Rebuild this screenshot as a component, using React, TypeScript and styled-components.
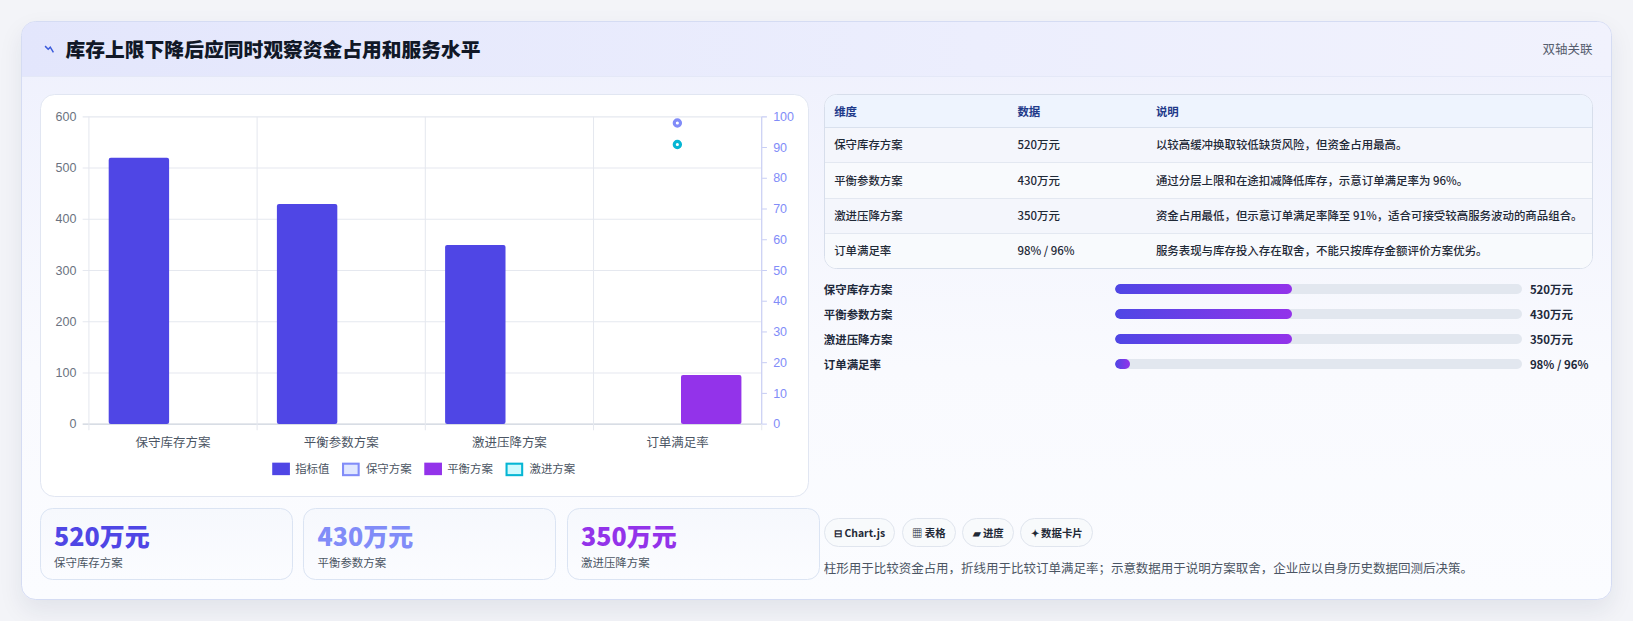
import React from "react";
import styled, { createGlobalStyle } from "styled-components";

const Global = createGlobalStyle`
  html, body { margin: 0; padding: 0; background: #f3f4f8; }
  body { font-family: "Noto Sans CJK SC", "Noto Sans", sans-serif; color: #1e293b; }
`;

const Page = styled.div`
  zoom: 1.0415;
  padding: 20px 85px 20px 20px;
  height: 596px;
  box-sizing: border-box;
`;
const Card = styled.div`
  width: 1528px;
  height: 556px;
  box-sizing: border-box;
  border: 1px solid #d5dcf3;
  border-radius: 14px;
  background: linear-gradient(180deg, #eef0fd 0%, #f9fafe 60%, #fbfcff 100%);
  box-shadow: 0 10px 24px rgba(30, 40, 80, 0.08);
  overflow: hidden;
  display: flex;
  flex-direction: column;
`;
const Header = styled.div`
  height: 52px;
  display: flex;
  align-items: center;
  justify-content: space-between;
  padding: 0 18px 0 20px;
  background: linear-gradient(90deg, #e3e6fc 0%, #eceefd 60%, #f1f2fd 100%);
  border-bottom: 1px solid #e4e8f7;
`;
const Title = styled.h1`
  margin: 0;
  font-size: 19px;
  font-weight: 800;
  color: #111827;
  display: flex;
  align-items: center;
  gap: 10px;
`;
const Tag = styled.span`
  font-size: 12px;
  color: #555d6e;
`;
const Body = styled.div`
  flex: 1;
  display: grid;
  grid-template-columns: 739px 739px;
  column-gap: 14px;
  padding: 16px 17px 18px 17px;
`;
const Col = styled.div`
  display: flex;
  flex-direction: column;
`;
const ChartCard = styled.div`
  height: 387px;
  box-sizing: border-box;
  background: #fff;
  border: 1px solid #e1e6f2;
  border-radius: 14px;
`;
const Stats = styled.div`
  display: grid;
  grid-template-columns: repeat(3, 1fr);
  gap: 10px;
  margin-top: 11px;
  width: 749px;
`;
const Stat = styled.div`
  height: 69px;
  box-sizing: border-box;
  border: 1px solid #dbe4f3;
  border-radius: 12px;
  background: linear-gradient(180deg, #f6f8fd, #fbfcff);
  padding: 9px 13px;
`;
const StatVal = styled.div<{ $c: string }>`
  font-size: 24px;
  font-weight: 800;
  color: ${(p) => p.$c};
  line-height: 32px;
`;
const StatLbl = styled.div`
  font-size: 11px;
  color: #4b5563;
  margin-top: 2px;
`;
const Table = styled.table`
  width: 100%;
  border-collapse: separate;
  border-spacing: 0;
  border: 1px solid #d7deeb;
  border-radius: 12px;
  overflow: hidden;
  font-size: 11px;
  background: #fff;
`;
const Th = styled.th`
  text-align: left;
  font-weight: 700;
  color: #1e3a8a;
  background: #eef4fe;
  height: 31px;
  padding: 0 9px;
  border-bottom: 1px solid #d9e1ee;
`;
const Td = styled.td<{ $alt?: boolean; $last?: boolean }>`
  padding: 8px 9px;
  height: 17px;
  line-height: 17px;
  color: #1f2937;
  background: ${(p) => (p.$alt ? "#f8fafd" : "#f4f6fc")};
  border-bottom: ${(p) => (p.$last ? "none" : "1px solid #e3e8f1")};
  vertical-align: top;
  font-weight: 500;
`;
const Bars = styled.div`
  display: flex;
  flex-direction: column;
  gap: 6px;
  margin-top: 10px;
`;
const BarRow = styled.div`
  display: grid;
  grid-template-columns: 272px 390px 1fr;
  align-items: center;
  column-gap: 8px;
  font-size: 11px;
  font-weight: 600;
  height: 18px;
  white-space: nowrap;
`;
const Track = styled.div`
  height: 10px;
  border-radius: 5px;
  background: #e2e7ef;
  overflow: hidden;
`;
const Fill = styled.div`
  height: 100%;
  border-radius: 5px;
  background: linear-gradient(90deg, #4f46e5, #9333ea);
`;
const Chips = styled.div`
  margin-top: auto;
  display: flex;
  gap: 6px;
`;
const Chip = styled.span`
  height: 27px;
  box-sizing: border-box;
  display: inline-flex;
  align-items: center;
  gap: 3px;
  padding: 0 9px;
  border: 1px solid #e0e5ee;
  border-radius: 14px;
  background: #f8fafc;
  font-size: 10px;
  font-weight: 600;
  color: #1f2937;
`;
const Note = styled.p`
  margin: 12px 0 3px;
  font-size: 12px;
  color: #4b5563;
`;

const rows = [
  ["保守库存方案", "520万元", "以较高缓冲换取较低缺货风险，但资金占用最高。"],
  ["平衡参数方案", "430万元", "通过分层上限和在途扣减降低库存，示意订单满足率为 96%。"],
  ["激进压降方案", "350万元", "资金占用最低，但示意订单满足率降至 91%，适合可接受较高服务波动的商品组合。"],
  ["订单满足率", "98% / 96%", "服务表现与库存投入存在取舍，不能只按库存金额评价方案优劣。"],
];
const bars = [
  ["保守库存方案", 43.6, "520万元"],
  ["平衡参数方案", 43.6, "430万元"],
  ["激进压降方案", 43.6, "350万元"],
  ["订单满足率", 3.5, "98% / 96%"],
] as const;

function Chart() {
  const x0 = 46, x1 = 692, y0 = 21, y1 = 316;
  const h = y1 - y0;
  const cw = (x1 - x0) / 4;
  const cats = ["保守库存方案", "平衡参数方案", "激进压降方案", "订单满足率"];
  const vals = [520, 430, 350];
  const ax = { fontSize: 12, fill: "#6b7280", fontFamily: "Liberation Sans, sans-serif" } as const;
  return (
    <svg width="739" height="385">
      {[0, 1, 2, 3, 4, 5, 6].map((i) => {
        const y = y1 - (h * i) / 6;
        return (
          <g key={i}>
            <line x1={x0 - 6} x2={x1} y1={y} y2={y} stroke={i === 0 ? "#cbd2dc" : "#e5e8ef"} />
            <text x={x0 - 12} y={y + 4} textAnchor="end" {...ax}>{i * 100}</text>
          </g>
        );
      })}
      {[0, 1, 2, 3, 4, 5, 6, 7, 8, 9, 10].map((i) => {
        const y = y1 - (h * i) / 10;
        return (
          <g key={i}>
            <line x1={x1} x2={x1 + 5} y1={y} y2={y} stroke="#c7cdf5" />
            <text x={x1 + 11} y={y + 4} {...ax} fill="#818cf8">{i * 10}</text>
          </g>
        );
      })}
      {[0, 1, 2, 3, 4].map((i) => (
        <line key={i} x1={x0 + cw * i} x2={x0 + cw * i} y1={y0} y2={y1 + 6} stroke="#e5e8ef" />
      ))}
      <line x1={x1} x2={x1} y1={y0} y2={y1} stroke="#c7cdf5" />
      {vals.map((v, i) => (
        <rect key={i} x={x0 + cw * i + 19} y={y1 - (h * v) / 600} width={58} height={(h * v) / 600} fill="#4f46e5" rx="2" />
      ))}
      <rect x={x0 + cw * 3 + 84} y={y1 - (h * 96) / 600} width={58} height={(h * 96) / 600} fill="#9333ea" rx="2" />
      <circle cx={611} cy={y1 - h * 0.98} r="3" fill="#fff" stroke="#818cf8" strokeWidth="3" />
      <circle cx={611} cy={y1 - h * 0.91} r="3" fill="#fff" stroke="#06b6d4" strokeWidth="3" />
      {cats.map((c, i) => (
        <text key={c} x={x0 + cw * i + cw / 2} y={y1 + 22} textAnchor="middle" fontSize="12" fill="#4b5563">{c}</text>
      ))}
      <g fontSize="11" fill="#4b5563">
        <rect x="222" y="353" width="17" height="12" fill="#4f46e5" />
        <text x="244" y="363">指标值</text>
        <rect x="290" y="354" width="15" height="11" fill="#e0e7ff" stroke="#818cf8" strokeWidth="2" />
        <text x="312" y="363">保守方案</text>
        <rect x="368" y="353" width="17" height="12" fill="#9333ea" />
        <text x="390" y="363">平衡方案</text>
        <rect x="447" y="354" width="15" height="11" fill="#cffafe" stroke="#06b6d4" strokeWidth="2" />
        <text x="469" y="363">激进方案</text>
      </g>
    </svg>
  );
}

export default function App() {
  return (
    <Page>
      <Global />
      <Card>
        <Header>
          <Title>
            <svg width="12" height="12" viewBox="0 0 12 12"><path d="M2 3l3 3 2-2 3 5" stroke="#3b5bdb" strokeWidth="1.4" fill="none" /></svg>
            库存上限下降后应同时观察资金占用和服务水平
          </Title>
          <Tag>双轴关联</Tag>
        </Header>
        <Body>
          <Col>
            <ChartCard><Chart /></ChartCard>
            <Stats>
              <Stat><StatVal $c="#4f46e5">520万元</StatVal><StatLbl>保守库存方案</StatLbl></Stat>
              <Stat><StatVal $c="#818cf8">430万元</StatVal><StatLbl>平衡参数方案</StatLbl></Stat>
              <Stat><StatVal $c="#9333ea">350万元</StatVal><StatLbl>激进压降方案</StatLbl></Stat>
            </Stats>
          </Col>
          <Col>
            <Table>
              <thead>
                <tr><Th style={{ width: 158 }}>维度</Th><Th style={{ width: 115 }}>数据</Th><Th>说明</Th></tr>
              </thead>
              <tbody>
                {rows.map((r, i) => (
                  <tr key={i}>
                    {r.map((c, j) => (
                      <Td key={j} $alt={i % 2 === 1} $last={i === rows.length - 1}>{c}</Td>
                    ))}
                  </tr>
                ))}
              </tbody>
            </Table>
            <Bars>
              {bars.map(([l, w, v]) => (
                <BarRow key={l}>
                  <span>{l}</span>
                  <Track><Fill style={{ width: `${w}%` }} /></Track>
                  <span>{v}</span>
                </BarRow>
              ))}
            </Bars>
            <Chips>
              <Chip>⊟ Chart.js</Chip>
              <Chip>▦ 表格</Chip>
              <Chip>▰ 进度</Chip>
              <Chip>✦ 数据卡片</Chip>
            </Chips>
            <Note>柱形用于比较资金占用，折线用于比较订单满足率；示意数据用于说明方案取舍，企业应以自身历史数据回测后决策。</Note>
          </Col>
        </Body>
      </Card>
    </Page>
  );
}
